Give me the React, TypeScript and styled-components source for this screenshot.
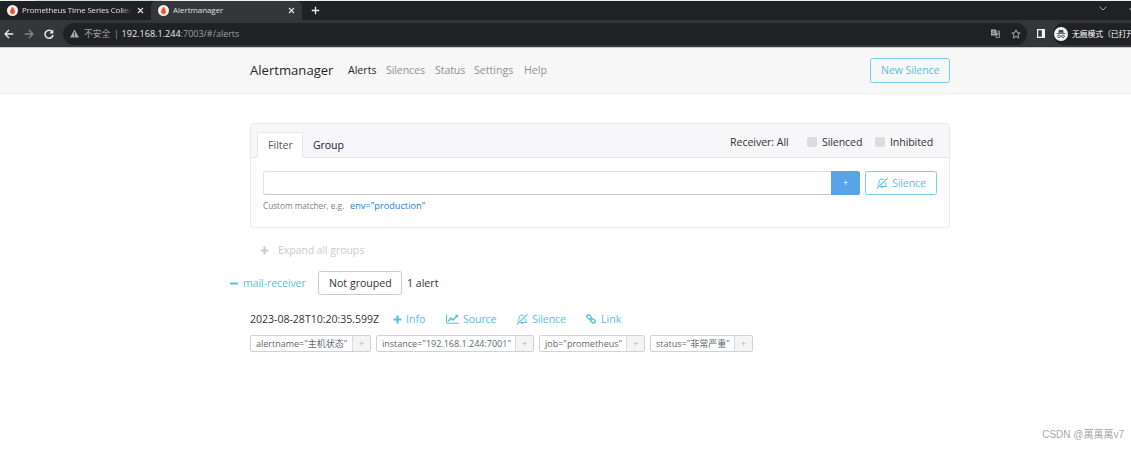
import React from "react";
import styled, { createGlobalStyle } from "styled-components";

const Global = createGlobalStyle`
  * { box-sizing: border-box; }
  html, body { margin: 0; height: 449px; overflow: hidden; background: #fff; }
  body { font-family: "Open Sans", "Noto Sans CJK SC", sans-serif; font-size: 10.6px; color: #303438; line-height: 16px; }
`;

/* Text run with a reserved width and optional tracking */
const Text = styled.span<{ $w?: number; $ls?: number; $size?: number; $color?: string; $ml?: number }>`
  display: block;
  flex: none;
  white-space: nowrap;
  ${(p) => (p.$w ? `width: ${p.$w}px;` : "")}
  ${(p) => (p.$ml ? `margin-left: ${p.$ml}px;` : "")}
  letter-spacing: ${(p) => p.$ls ?? 0}px;
  ${(p) => (p.$size ? `font-size: ${p.$size}px;` : "")}
  ${(p) => (p.$color ? `color: ${p.$color};` : "")}
`;

/* Browser chrome */
const TopEdge = styled.div`
  height: 1px;
  background: linear-gradient(to right, #e9eeee 36px, #c5dfdf 36px, #c5dfdf 162px, #eef1f1 162px);
`;
const TabStrip = styled.div`
  height: 19px;
  background: #202124;
  display: flex;
  color: #dfe1e4;
  font-size: 7.9px;
`;
const BrowserTab = styled.div<{ $active?: boolean; $w: number }>`
  width: ${(p) => p.$w}px;
  height: 19px;
  padding: 0 7px 1px 7px;
  display: flex;
  align-items: center;
  background: ${(p) => (p.$active ? "#35363a" : "#202124")};
  border-radius: 5px 5px 0 0;
  svg { flex: none; }
`;
const TabTitle = styled.span<{ $fade?: boolean }>`
  flex: 1;
  overflow: hidden;
  white-space: nowrap;
  margin: 0 5px 0 4px;
  ${(p) => (p.$fade ? "letter-spacing: -0.12px; mask-image: linear-gradient(to right, #000 90%, transparent);" : "")}
`;
const NewTab = styled.div`
  flex: 1;
  display: flex;
  align-items: center;
  padding: 0 0 1px 9px;
`;
const WindowButtons = styled.div`
  display: flex;
  align-items: center;
  gap: 22px;
  width: 32px;
  overflow: hidden;
  padding-bottom: 5px;
  svg { flex: none; }
`;
const Toolbar = styled.div`
  height: 27px;
  background: #35363a;
  display: flex;
  align-items: center;
  padding-left: 4px;
  overflow: hidden;
  svg { flex: none; }
`;
const NavIcons = styled.div`
  display: flex;
  gap: 10px;
  width: 59px;
  flex: none;
  align-items: center;
`;
const Address = styled.div`
  width: 964px;
  height: 22px;
  border-radius: 11px;
  background: #202124;
  display: flex;
  align-items: center;
  padding: 0 6px 0 7px;
  color: #9aa0a6;
  flex: none;
`;
const Grow = styled.div`
  flex: 1;
`;
const Incognito = styled.div`
  margin-left: 7px;
  height: 22px;
  width: 90px;
  border-radius: 11px;
  background: #202124;
  display: flex;
  align-items: center;
  gap: 4px;
  padding-left: 1px;
  color: #fff;
  flex: none;
`;

/* Alertmanager page */
const NavBar = styled.header`
  height: 47px;
  background: #f7f7f7;
  border-top: 1px solid #c9c9ca;
  border-bottom: 1px solid #ececec;
  padding: 0 181px 1px 250px;
  display: flex;
  align-items: center;
`;
const OutlineButton = styled.button<{ $w: number; $h: number }>`
  width: ${(p) => p.$w}px;
  height: ${(p) => p.$h}px;
  border: 1px solid #7ccbe5;
  border-radius: 2.5px;
  background: transparent;
  color: #5bc0de;
  font: inherit;
  padding: 0 0 0 10px;
  display: flex;
  align-items: center;
`;
const Main = styled.main`
  padding: 29px 181px 0 250px;
`;
const Card = styled.section`
  height: 105px;
  border: 1px solid #e9e9ea;
  border-radius: 3px;
`;
const CardHeader = styled.div`
  height: 34px;
  background: #f7f7f9;
  border-bottom: 1px solid #e4e4e5;
  padding: 0 0 0 6px;
  display: flex;
  align-items: flex-end;
`;
const CardTab = styled.div`
  width: 46px;
  height: 26px;
  margin-bottom: -1px;
  background: #fff;
  border: 1px solid #e9e9ea;
  border-bottom: 0;
  border-radius: 3px 3px 0 0;
  padding: 4px 0 0 10px;
  color: #555b62;
`;
const CardLink = styled.div`
  padding: 0 0 4px 10px;
  color: #1d2233;
`;
const Options = styled.div`
  display: flex;
  align-items: center;
  height: 31px;
`;
const Check = styled.span`
  width: 10px;
  height: 10px;
  border-radius: 2px;
  background: #dcdcdc;
  margin-right: 5px;
`;
const FilterRow = styled.div`
  padding: 13px 12px 0;
  display: flex;
`;
const Input = styled.div`
  width: 568px;
  height: 24px;
  border: 1px solid #e2e2e2;
  border-bottom-color: #c9c9c9;
  border-right: 0;
  border-radius: 2.5px 0 0 2.5px;
`;
const AddButton = styled.button`
  width: 29px;
  height: 24px;
  margin-right: 5px;
  border: 0;
  padding: 0;
  border-radius: 0 2.5px 2.5px 0;
  background: #58a4e6;
  color: #fff;
  font: inherit;
  font-size: 9px;
`;
const Hint = styled.div`
  display: flex;
  padding: 3px 12px 0;
`;
const Expand = styled.div`
  display: flex;
  align-items: center;
  height: 16px;
  margin-top: 14px;
  padding-left: 10px;
  gap: 9px;
  color: #c9cccd;
`;
const GroupRow = styled.div`
  display: flex;
  align-items: center;
  height: 24px;
  margin: 13px 0 0 -20px;
  gap: 5px;
  color: #5bc0de;
`;
const GroupBadge = styled.div`
  width: 84px;
  height: 24px;
  border: 1px solid #ccc;
  border-radius: 2.5px;
  padding: 3px 0 0 10px;
  color: #303438;
`;
const AlertRow = styled.div`
  display: flex;
  align-items: center;
  height: 16px;
  margin-top: 16px;
`;
const Action = styled.a<{ $w: number; $gap: number }>`
  width: ${(p) => p.$w}px;
  display: flex;
  align-items: center;
  gap: ${(p) => p.$gap}px;
  color: #5bc0de;
  svg { flex: none; }
`;
const Labels = styled.div`
  display: flex;
  gap: 5px;
  margin-top: 8px;
`;
const Label = styled.div<{ $w: number }>`
  width: ${(p) => p.$w}px;
  height: 17px;
  border: 1px solid #d2d2d2;
  border-radius: 2px;
  display: flex;
  justify-content: space-between;
  font-size: 9px;
  line-height: 15px;
  color: #5d6a73;
  padding-left: 5px;
`;
const LabelAdd = styled.span`
  width: 18px;
  background: #f4f4f4;
  border-left: 1px solid #dcdcdc;
  color: #b4b8bb;
  text-align: center;
`;
const Watermark = styled.footer`
  display: flex;
  justify-content: flex-end;
  margin-top: 75px;
  padding-right: 7px;
  font-family: "Liberation Sans", "Noto Sans CJK SC", sans-serif;
  color: #a9a9a9;
`;

const Logo = () => (
  <svg width="11" height="11" viewBox="0 0 22 22">
    <circle cx="11" cy="11" r="11" fill="#f6f1ef" />
    <path d="M11 3c1 3 4 4.500 4 7.500 1 1 1 2.500.5 4.500h-9C6 13 6 11.500 7 10.500 7 7.500 10 6 11 3zM7 15h8v2H7zM8 17.500h6c-1 2-5 2-6 0z" fill="#e6522c" />
  </svg>
);
const Close = () => (
  <svg width="7" height="7" viewBox="0 0 7 7" stroke="#e4e5e7" strokeWidth="1.1"><path d="M1 1l5 5M6 1L1 6" /></svg>
);
const Arrow = ({ back }: { back?: boolean }) => (
  <svg width="10" height="10" viewBox="0 0 10 10" fill="none" stroke={back ? "#e8eaed" : "#85878a"} strokeWidth="1.3">
    <path d={back ? "M9.3 5H1.2M5 1L1 5l4 4" : "M.7 5h8.1M5 1l4 4-4 4"} />
  </svg>
);
const Reload = () => (
  <svg width="10" height="10" viewBox="0 0 10 10" fill="none">
    <path d="M8.2 2.7A4 4 0 1 0 9 6" stroke="#e8eaed" strokeWidth="1.5" /><path d="M9.3.5v4H5.4z" fill="#e8eaed" />
  </svg>
);
const Plus = () => (
  <svg width="9" height="9" viewBox="0 0 9 9" fill="currentColor"><path d="M3.4 .5h2.2v2.9h2.9v2.2H5.6v2.9H3.4V5.6H.5V3.4h2.9z" /></svg>
);
const Minus = () => (
  <svg width="8" height="9" viewBox="0 0 8 9" fill="currentColor"><rect x="0" y="3.4" width="8" height="2.1" rx=".5" /></svg>
);
const BellSlash = () => (
  <svg width="12" height="11" viewBox="0 0 12 11" fill="none" stroke="currentColor" strokeWidth="1">
    <path d="M11.4.4L.8 10.3" strokeWidth="1.1" />
    <path d="M8.3 1.8C7.7 1.3 7 1.1 6 1.1 4 1.1 3 2.5 3 4.2c0 1.7-.5 2.7-1.5 3.8M9 4.3c.1 1.8.6 2.9 1.6 4.2H4.2M5 9c.2 1 1.8 1 2 0" />
  </svg>
);
const Chart = () => (
  <svg width="13" height="10" viewBox="0 0 13 10" fill="none" stroke="currentColor">
    <path d="M.6.5v8.7h12" strokeWidth="1" /><path d="M2.2 7.2l2.7-3 2 1.8 4-4" strokeWidth="1.6" /><path d="M8.9.8h3.2v3.2z" fill="currentColor" stroke="none" />
  </svg>
);
const Chain = () => (
  <svg width="10" height="10" viewBox="0 0 10 10" fill="none" stroke="currentColor" strokeWidth="1.35">
    <rect x="-2.3" y="-1.6" width="4.6" height="3.2" rx="1.3" transform="translate(3 3) rotate(45)" />
    <rect x="-2.3" y="-1.6" width="4.6" height="3.2" rx="1.3" transform="translate(7 7) rotate(45)" />
    <path d="M4 4l2 2" />
  </svg>
);
const Warning = () => (
  <svg width="9" height="9" viewBox="0 0 9 9"><path d="M4.5.5L9 8.5H0z" fill="#a4a8ac" /><path d="M4.5 3.2v2.6M4.5 6.5v1" stroke="#202124" strokeWidth=".9" /></svg>
);
const Translate = () => (
  <svg width="9" height="9" viewBox="0 0 9 9" fill="none" stroke="#aeb1b5" strokeWidth=".7">
    <path d="M0 .4h4.700l1.600 6.100H0z" fill="#aeb1b5" stroke="none" />
    <path d="M3.600 2.700a1.300 1.300 0 1 0 .1 1.500H2.600" stroke="#202124" />
    <path d="M5.200 2h3.300v6.500H4.700l1-2M5.800 4H8M7.500 4c0 1-.6 1.500-1.200 2M6.200 4.500l1.600 2" />
  </svg>
);
const Star = () => (
  <svg width="10" height="10" viewBox="0 0 10 10" fill="none" stroke="#b8babd" strokeWidth=".9">
    <path d="M5 .9l1.2 2.8 3 .3-2.3 2 .7 3L5 7.4 2.400 9l.7-3L.8 4l3-.3z" />
  </svg>
);
const Panel = () => (
  <svg width="10" height="9" viewBox="0 0 10 9"><path d="M1 0h8v9H1z" fill="#f1f1f2" /><path d="M2.200 1.300h3.600v6.400H2.200z" fill="#35363a" /></svg>
);
const Spy = () => (
  <svg width="14" height="14" viewBox="0 0 14 14">
    <circle cx="7" cy="7" r="7" fill="#f1f3f4" />
    <path d="M4.3 5.8L5 2.8l2 .5 2-.5.7 3zM2.5 6.2h9v.9h-9z" fill="#3c4043" />
    <g fill="none" stroke="#3c4043" strokeWidth=".8"><circle cx="4.9" cy="9.3" r="1.3" /><circle cx="9.1" cy="9.3" r="1.3" /><path d="M6.2 9.2h1.6" /></g>
  </svg>
);

const labels = [
  { text: 'alertname="主机状态"', w: 121 },
  { text: 'instance="192.168.1.244:7001"', w: 158 },
  { text: 'job="prometheus"', w: 106 },
  { text: 'status="非常严重"', w: 103 },
];

export default function App() {
  return (
    <>
      <Global />
      <TopEdge />
      <TabStrip>
        <BrowserTab $w={151}><Logo /><TabTitle $fade>Prometheus Time Series Collec</TabTitle><Close /></BrowserTab>
        <BrowserTab $w={151} $active><Logo /><TabTitle>Alertmanager</TabTitle><Close /></BrowserTab>
        <NewTab>
          <svg width="9" height="9" viewBox="0 0 9 9" stroke="#eceded" strokeWidth="1.3"><path d="M4.5.8v7.4M.8 4.5h7.4" /></svg>
        </NewTab>
        <WindowButtons>
          <svg width="8" height="5" viewBox="0 0 8 5" fill="none" stroke="#a5a7aa"><path d="M.7.7L4 4 7.3.7" /></svg>
          <svg width="8" height="5" viewBox="0 0 8 5" stroke="#a5a7aa"><path d="M0 3h8" /></svg>
        </WindowButtons>
      </TabStrip>
      <Toolbar>
        <NavIcons><Arrow back /><Arrow /><Reload /></NavIcons>
        <Address>
          <Warning />
          <Text $w={30} $size={8.8} $ml={5}>不安全</Text>
          <Text $w={7.5} $size={9}>|</Text>
          <Text $size={9.1} $color="#e8eaed">192.168.1.244</Text>
          <Text $size={9.1} $ls={-0.06}>:7003/#/alerts</Text>
          <Grow />
          <Translate />
          <Text $w={11} />
          <Star />
        </Address>
        <Text $w={9} />
        <Panel />
        <Incognito><Spy /><Text $size={7.9} $ls={-0.15}>无痕模式（已打开</Text></Incognito>
      </Toolbar>
      <NavBar>
        <Text $w={98} $size={13.1} $color="#25282b">Alertmanager</Text>
        <Text $w={38} $color="#25282b">Alerts</Text>
        <Text $w={49} $color="#909294" $ls={-0.1}>Silences</Text>
        <Text $w={39} $color="#909294" $ls={-0.1}>Status</Text>
        <Text $w={50} $color="#909294">Settings</Text>
        <Text $color="#909294">Help</Text>
        <Grow />
        <OutlineButton $w={80} $h={25}><Text $ls={-0.1}>New Silence</Text></OutlineButton>
      </NavBar>
      <Main>
        <Card>
          <CardHeader>
            <CardTab><Text>Filter</Text></CardTab>
            <CardLink><Text $ls={-0.1}>Group</Text></CardLink>
            <Grow />
            <Options>
              <Text $w={77} $ls={-0.05}>Receiver: All</Text>
              <Check /><Text $w={53} $ls={-0.1}>Silenced</Text>
              <Check /><Text $w={59} $ls={-0.1}>Inhibited</Text>
            </Options>
          </CardHeader>
          <FilterRow>
            <Input />
            <AddButton>+</AddButton>
            <OutlineButton $w={72} $h={24}>
              <BellSlash /><Text $ml={4} $ls={-0.1}>Silence</Text>
            </OutlineButton>
          </FilterRow>
          <Hint>
            <Text $w={87} $size={8.2} $color="#7c8186">Custom matcher, e.g.</Text>
            <Text $size={9.2} $color="#1f7ee0">env="production"</Text>
          </Hint>
        </Card>
        <Expand><Plus /><Text $ls={-0.11}>Expand all groups</Text></Expand>
        <GroupRow>
          <Minus />
          <Text $w={70} $ls={-0.1}>mail-receiver</Text>
          <GroupBadge><Text>Not grouped</Text></GroupBadge>
          <Text $color="#303438">1 alert</Text>
        </GroupRow>
        <AlertRow>
          <Text $w={143} $ls={-0.04}>2023-08-28T10:20:35.599Z</Text>
          <Action $w={53} $gap={4}><Plus /><Text>Info</Text></Action>
          <Action $w={70} $gap={4}><Chart /><Text $ls={-0.1}>Source</Text></Action>
          <Action $w={70} $gap={4}><BellSlash /><Text $ls={-0.1}>Silence</Text></Action>
          <Action $w={50} $gap={5}><Chain /><Text>Link</Text></Action>
        </AlertRow>
        <Labels>
          {labels.map((l) => (
            <Label key={l.text} $w={l.w}><Text>{l.text}</Text><LabelAdd>+</LabelAdd></Label>
          ))}
        </Labels>
      </Main>
      <Watermark><Text $size={10}>CSDN @萬萬萬v7</Text></Watermark>
    </>
  );
}
